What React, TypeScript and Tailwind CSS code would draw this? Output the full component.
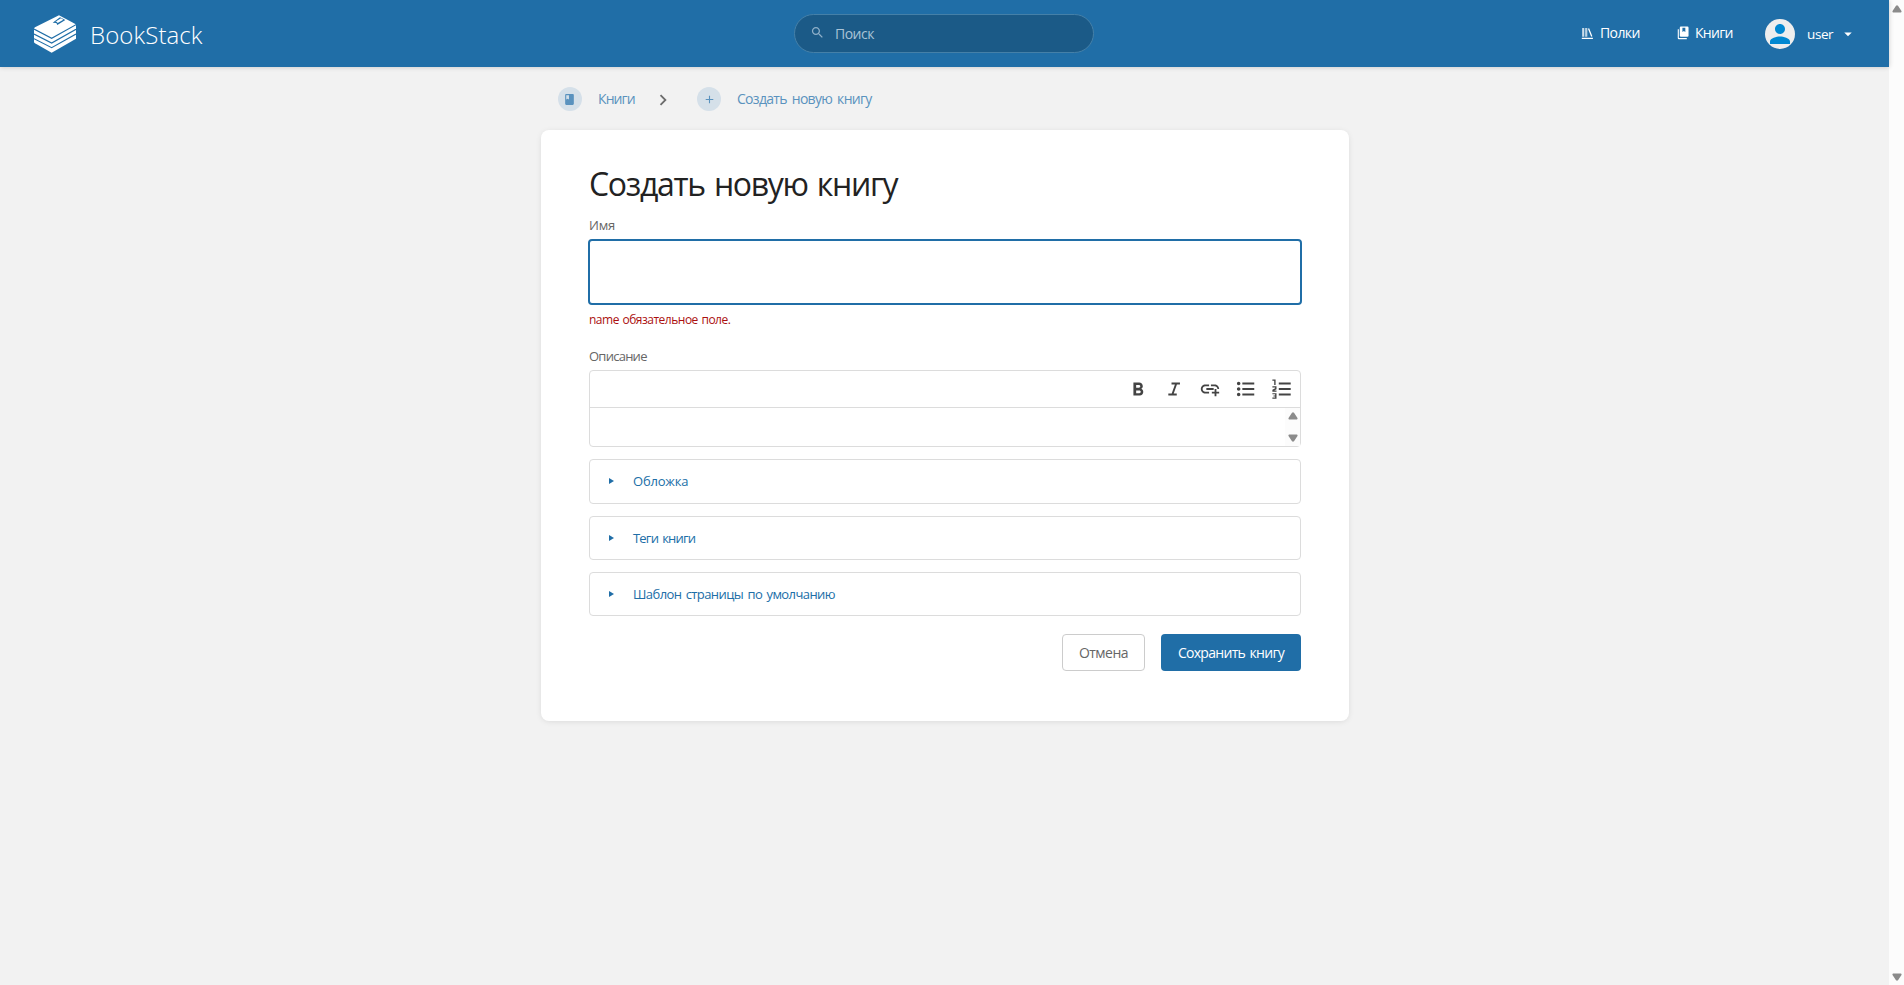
import React from "react";

type IconProps = { d: string; className?: string };

function Icon({ d, className = "" }: IconProps) {
  return (
    <svg viewBox="0 0 24 24" fill="currentColor" className={`block shrink-0 ${className}`}>
      <path d={d} />
    </svg>
  );
}

const paths = {
  search:
    "M15.5 14h-.79l-.28-.27C15.41 12.59 16 11.11 16 9.5 16 5.91 13.09 3 9.5 3S3 5.91 3 9.5 5.91 16 9.5 16c1.61 0 3.09-.59 4.23-1.57l.27.28v.79l5 4.99L20.49 19l-4.99-5zm-6 0C7.01 14 5 11.99 5 9.5S7.01 5 9.5 5 14 7.01 14 9.5 11.99 14 9.5 14z",
  shelves: "M2.500 2h2.600v16H2.500zM7 2h1.500v16H7zM9.800 2h1.700v16H9.800zM12.800 3l2.200-.8 6 15-2.200.8zM1.500 19.800h20.500V22H1.500z",
  books:
    "M3 5.500h1.900v15h13.600v2H5a2 2 0 0 1-2-2zM8.400 1h11.200a1.900 1.900 0 0 1 1.900 1.900v13.700a1.900 1.900 0 0 1-1.900 1.900H8.400a1.900 1.900 0 0 1-1.900-1.900V2.900A1.900 1.900 0 0 1 8.400 1zm2.600 1.800v7.500l2.500-1.700 2.500 1.700V2.800z",
  book: "M18 2H6c-1.100 0-2 .9-2 2v16c0 1.100.9 2 2 2h12c1.100 0 2-.9 2-2V4c0-1.100-.9-2-2-2zM6 4h5v8l-2.500-1.500L6 12V4z",
  plus: "M19 13h-6v6h-2v-6H5v-2h6V5h2v6h6v2z",
  chevron: "M10 6 8.590 7.410 13.170 12l-4.580 4.590L10 18l6-6z",
  person:
    "M12 12c2.210 0 4-1.790 4-4s-1.790-4-4-4-4 1.790-4 4 1.790 4 4 4zm0 2c-2.670 0-8 1.340-8 4v2h16v-2c0-2.660-5.330-4-8-4z",
  caret: "M7 10l5 5 5-5z",
  bold: "M15.6 11.800c.97-.67 1.650-1.770 1.650-2.800 0-2.260-1.750-4-4-4H7v14h7.040c2.090 0 3.710-1.700 3.710-3.790 0-1.520-.86-2.820-2.150-3.410zM10 7.500h3c.83 0 1.500.67 1.500 1.500s-.67 1.500-1.500 1.500h-3v-3zm3.500 9H10v-3h3.500c.83 0 1.500.67 1.500 1.500s-.67 1.500-1.500 1.500z",
  italic: "M5.800 19v-2.200h3.700L13 7.200H9.300V5h9.200v2.200h-3.300l-3.500 9.600h3.300V19z",
  link: "M8 11h8v2H8v-2zm12.100 1H22c0-2.760-2.240-5-5-5h-4v1.900h4c1.710 0 3.100 1.390 3.100 3.100zM3.900 12c0-1.710 1.390-3.100 3.100-3.100h4V7H7c-2.760 0-5 2.240-5 5s2.240 5 5 5h4v-1.900H7c-1.710 0-3.100-1.390-3.100-3.100zM19 12h-2v3h-3v2h3v3h2v-3h3v-2h-3v-3z",
  bullets:
    "M4 10.100c-1.050 0-1.900.85-1.900 1.900s.85 1.900 1.900 1.900 1.900-.85 1.900-1.900-.85-1.900-1.900-1.900zm0-6c-1.050 0-1.900.85-1.900 1.900S2.950 7.900 4 7.900 5.900 7.050 5.900 6 5.050 4.100 4 4.100zm0 12c-1.050 0-1.900.85-1.900 1.900s.85 1.900 1.900 1.900 1.900-.85 1.900-1.900-.85-1.900-1.900-1.900zM8 19h13v-2H8v2zm0-6h13v-2H8v2zm0-8v2h13V5H8z",
  numbers:
    "M8.500 5h13v2h-13zM8.500 11h13v2h-13zM8.500 17h13v2h-13zM1.500 1.500h3.500v6H3.500V3H1.500zM1.500 9h4.500v3.200L3.500 13.700H6V15H1.500v-2.100L4.500 11.200v-.9h-3zM1.500 16.500H6V22.500H1.500v-1.300h3v-1H2.700v-1.200h1.800v-1.200h-3z",
};

function Logo() {
  return (
    <svg viewBox="0 0 126 114" className="block h-[38px] w-[42px] shrink-0">
      <path d="M75 1 124 27Q126 29 126 31V71L53 113 3 85Q0 83 0 80V42Q0 39 3 37Z" fill="#fff" />
      <path
        d="M0 42 53 70 126 29M0 57 53 84 126 43M0 71 53 98 126 57"
        fill="none"
        stroke="#206ea7"
        strokeWidth="3.600"
      />
      <path d="M78 7 94 15 70 30 67 24 56 23z" fill="#206ea7" />
      <path d="M81 10 88 14 71 24 68 20 64 20z" fill="#fff" />
    </svg>
  );
}

function Triangle({ down = false }: { down?: boolean }) {
  return (
    <svg viewBox="0 0 10 8" className="block h-2 w-2.5" fill="#8b8b8b">
      <path
        d={down ? "M1 .5h8q1 .8.300 1.800L6 7.200q-1 .9-2 0L.7 2.300Q0 1.300 1 .5z" : "M1 7.500h8q1-.8.300-1.800L6 .8q-1-.9-2 0L.7 5.700Q0 6.700 1 7.500z"}
      />
    </svg>
  );
}

function Header() {
  return (
    <header className="relative flex h-[67px] shrink-0 items-center justify-between bg-[#206ea7] text-white shadow-[0_0_5px_rgba(0,0,0,0.2)]">
      <div className="flex items-center pl-[34px]">
        <Logo />
        <span className="pl-[14px] pt-[3px] text-[24px] font-light leading-8 tracking-[0.1px]">BookStack</span>
      </div>
      <div className="absolute left-[794px] top-[14px] flex h-[39px] w-[300px] items-center rounded-full border border-[#4580a8] bg-[#1b5a87] pl-[15px] text-[#a9c3d6]">
        <Icon d={paths.search} className="mb-0.5 size-[15px] text-[#8fb0c9]" />
        <span className="pl-[10px] text-[14px] leading-5 tracking-[-0.5px]">Поиск</span>
      </div>
      <nav className="flex items-center pr-[32px] text-[14px] leading-5">
        <a className="flex items-center pb-px">
          <Icon d={paths.shelves} className="size-[13px]" />
          <span className="w-[82px] pl-[6px] tracking-[-0.6px]">Полки</span>
        </a>
        <a className="flex items-center pb-px">
          <Icon d={paths.books} className="size-[14px]" />
          <span className="w-[75px] pl-[5px] tracking-[-0.7px]">Книги</span>
        </a>
        <span className="mt-px flex size-[30px] items-center justify-center rounded-full bg-[#eee] text-[#0288d1]">
          <Icon d={paths.person} className="size-[30px]" />
        </span>
        <span className="w-[44px] pl-[12px] text-[13.500px] tracking-[-0.4px]">user</span>
        <Icon d={paths.caret} className="size-[18px]" />
      </nav>
    </header>
  );
}

function Breadcrumbs() {
  return (
    <div className="flex h-[63px] items-center pl-[17px] pt-px text-[14px] leading-5 text-[#5a92be]">
      <span className="flex size-6 items-center justify-center rounded-full bg-[#d5e0e9]">
        <Icon d={paths.book} className="mr-px size-[13px]" />
      </span>
      <span className="w-[70px] pl-4 tracking-[-0.9px]">Книги</span>
      <Icon d={paths.chevron} className="mt-0.5 size-[22px] text-[#6c6c6c]" />
      <span className="ml-[23px] flex size-6 items-center justify-center rounded-full bg-[#d5e0e9]">
        <Icon d={paths.plus} className="size-[13px]" />
      </span>
      <span className="pl-4 tracking-[-0.7px] [word-spacing:2px]">Создать новую книгу</span>
    </div>
  );
}

function Collapsible({ title, className }: { title: string; className: string }) {
  return (
    <div className={`flex items-center rounded border border-[#dcdcdc] pl-[19px] text-[#206ea7] ${className}`}>
      <svg viewBox="0 0 5 6" className="block h-1.5 w-[5px]" fill="currentColor">
        <path d="M0 0 5 3 0 6z" />
      </svg>
      <span className="pl-[19px] text-[13px] leading-5">{title}</span>
    </div>
  );
}

export default function App() {
  return (
    <div className="flex h-[985px] w-[1904px] overflow-hidden bg-[#f2f2f2] font-['Open_Sans','Noto_Sans',sans-serif]">
      <div className="flex w-[1889px] shrink-0 flex-col">
        <Header />
        <main className="ml-[541px] w-[808px]">
          <Breadcrumbs />
          <section className="h-[591px] rounded-lg bg-white px-12 pt-[32px] shadow-[0_1px_6px_-1px_rgba(0,0,0,0.12)]">
            <h1 className="h-[53px] text-[32px] leading-[44px] tracking-[-1.3px] text-[#222] [word-spacing:2px]">
              Создать новую книгу
            </h1>
            <div className="h-[24px] text-[13px] leading-5 tracking-[-0.2px] text-[#666]">Имя</div>
            <div className="-mx-px h-[66px] rounded-[4px] border-2 border-[#206ea7]" />
            <div className="h-[41px] pt-[5px] text-[12px] leading-5 tracking-[-0.5px] text-[#ab0f0e] [word-spacing:1px]">
              name обязательное поле.
            </div>
            <div className="h-[24px] text-[13px] leading-5 tracking-[-0.75px] text-[#666]">Описание</div>
            <div className="flex h-[77px] flex-col rounded border border-[#dcdcdc]">
              <div className="flex h-[37px] shrink-0 items-center justify-end gap-[14px] border-b border-[#dcdcdc] pr-[7px] text-[#444]">
                <Icon d={paths.bold} className="size-[22px]" />
                <Icon d={paths.italic} className="size-[22px]" />
                <Icon d={paths.link} className="size-[22px]" />
                <Icon d={paths.bullets} className="size-[22px]" />
                <Icon d={paths.numbers} className="size-[22px]" />
              </div>
              <div className="flex flex-1 justify-end">
                <div className="flex w-[15px] flex-col items-center justify-between bg-[#fcfcfc] py-1">
                  <Triangle />
                  <Triangle down />
                </div>
              </div>
            </div>
            <Collapsible title="Обложка" className="mt-3 h-[45px] pb-px tracking-[-0.2px]" />
            <Collapsible title="Теги книги" className="mt-3 h-[44px] tracking-[-0.8px] [word-spacing:1.5px]" />
            <Collapsible
              title="Шаблон страницы по умолчанию"
              className="mt-3 h-[44px] tracking-[-0.58px] [word-spacing:1.500px]"
            />
            <div className="mt-[18px] flex justify-end gap-4 text-[14px] leading-5">
              <button className="h-[37px] w-[83px] rounded border border-[#ccc] pt-px tracking-[-0.5px] text-[#666]">
                Отмена
              </button>
              <button className="h-[37px] w-[140px] rounded bg-[#206ea7] pt-px tracking-[-0.7px] text-white [word-spacing:1.5px]">
                Сохранить книгу
              </button>
            </div>
          </section>
        </main>
      </div>
      <div className="flex w-[15px] flex-col items-center justify-between bg-[#fcfcfc] pb-[4px] pt-[5px]">
        <Triangle />
        <Triangle down />
      </div>
    </div>
  );
}
